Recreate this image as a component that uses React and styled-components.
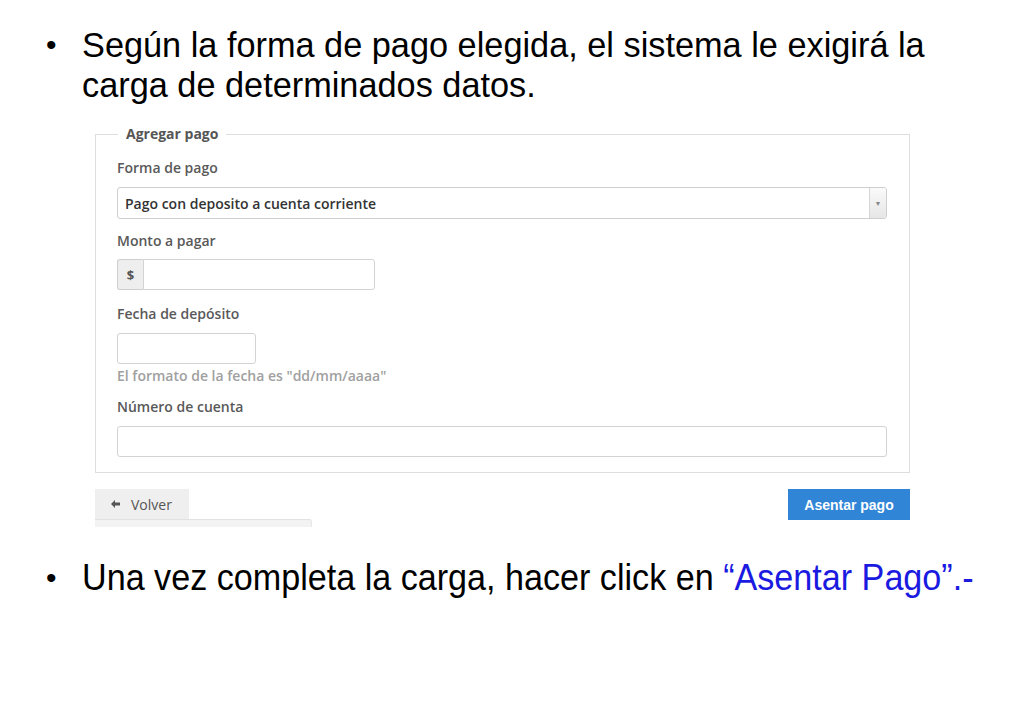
import React from "react";
import styled, { createGlobalStyle } from "styled-components";

const Global = createGlobalStyle`
  html, body { margin: 0; padding: 0; background: #fff; }
  body { width: 1024px; height: 709px; overflow: hidden; }
`;

const Slide = styled.div`
  width: 1024px;
  height: 709px;
  box-sizing: border-box;
  padding-top: 25px;
  display: flex;
  flex-direction: column;
`;

const Bullet = styled.div`
  display: flex;
  align-items: flex-start;
  padding-left: 46px;
  font-family: "Liberation Sans", Arial, sans-serif;
  font-size: ${(p) => p.$fs || 34.3}px;
  line-height: 40px;
  color: #000;
  margin-top: ${(p) => p.$mt || 0}px;
`;

const Dot = styled.span`
  width: 36px;
  flex: none;
  font-size: 30px;
`;

const BulletText = styled.div`
  width: ${(p) => p.$w || 880}px;
  transform-origin: left center;
  white-space: ${(p) => (p.$nowrap ? "nowrap" : "normal")};
  ${(p) => (p.$sx ? `transform: scaleX(${p.$sx});` : "")}
`;

const Blue = styled.span`
  color: #1a1ae0;
`;

const FormArea = styled.div`
  margin-left: 95px;
  width: 815px;
  margin-top: 19px;
  font-family: "Open Sans", sans-serif;
  font-size: 14px;
  color: #555;
`;

const Fieldset = styled.fieldset`
  margin: 0;
  border: 1px solid #dedede;
  padding: 14px 22px 15px 21px;
  min-width: 0;
`;

const Legend = styled.legend`
  padding: 0 8px;
  margin-left: 1px;
  font-weight: 700;
  font-size: 14px;
  line-height: 20px;
  color: #555;
`;

const Group = styled.div`
  margin-top: ${(p) => p.$mt || 0}px;
`;

const Label = styled.label`
  display: block;
  font-weight: 600;
  line-height: 20px;
  margin-bottom: ${(p) => p.$mb || 9}px;
  color: #595959;
`;

const SelectBox = styled.div`
  height: 32px;
  box-sizing: border-box;
  border: 1px solid #cfcfcf;
  border-radius: 3px;
  display: flex;
  align-items: stretch;
  overflow: hidden;
`;

const SelectValue = styled.div`
  flex: 1;
  padding-left: 7px;
  display: flex;
  align-items: center;
  color: #333;
  font-weight: 600;
  font-size: 14px;
`;

const SelectArrow = styled.div`
  width: 16px;
  border-left: 1px solid #d6d6d6;
  background: linear-gradient(#fafafa, #e6e6e6);
  display: flex;
  align-items: center;
  justify-content: center;
  color: #888;
  font-size: 7px;
`;

const InputGroup = styled.div`
  display: flex;
  width: 258px;
  height: 31px;
`;

const Addon = styled.div`
  width: 26px;
  box-sizing: border-box;
  border: 1px solid #cfcfcf;
  border-right: none;
  border-radius: 3px 0 0 3px;
  background: #eeeeee;
  display: flex;
  align-items: center;
  justify-content: center;
  font-weight: 700;
  font-size: 13px;
  color: #555;
`;

const Input = styled.div`
  box-sizing: border-box;
  height: 31px;
  border: 1px solid #d3d3d3;
  border-radius: ${(p) => (p.$grouped ? "0 3px 3px 0" : "3px")};
  width: ${(p) => (p.$w ? `${p.$w}px` : "auto")};
  flex: ${(p) => (p.$grouped ? 1 : "none")};
  background: #fff;
`;

const Help = styled.div`
  margin-top: 3px;
  line-height: 18px;
  color: #a0a0a0;
  font-weight: 600;
  font-size: 14px;
`;

const Actions = styled.div`
  display: flex;
  justify-content: space-between;
  align-items: flex-start;
  margin-top: 16px;
`;

const BackWrap = styled.div`
  display: flex;
  flex-direction: column;
`;

const BackButton = styled.div`
  width: 94px;
  height: 30px;
  background: #efefef;
  display: flex;
  align-items: center;
  gap: 11px;
  padding-left: 16px;
  box-sizing: border-box;
  color: #555;
  font-size: 14px;
`;

const Strip = styled.div`
  width: 216px;
  height: 7px;
  background: #f3f3f3;
  border-top: 1px solid #e2e2e2;
  border-right: 1px solid #e8e8e8;
  border-radius: 0 3px 0 0;
`;

const PrimaryButton = styled.div`
  width: 122px;
  height: 31px;
  background: #3085d6;
  color: #fff;
  font-family: "Liberation Sans", Arial, sans-serif;
  font-weight: 700;
  font-size: 14px;
  display: flex;
  align-items: center;
  justify-content: center;
`;

export default function App() {
  return (
    <>
      <Global />
      <Slide>
        <Bullet>
          <Dot>•</Dot>
          <BulletText $w={860}>
            Según la forma de pago elegida, el sistema le exigirá la carga de determinados datos.
          </BulletText>
        </Bullet>
        <FormArea>
          <Fieldset>
            <Legend>Agregar pago</Legend>
            <Group>
              <Label>Forma de pago</Label>
              <SelectBox>
                <SelectValue>Pago con deposito a cuenta corriente</SelectValue>
                <SelectArrow>▼</SelectArrow>
              </SelectBox>
            </Group>
            <Group $mt={12}>
              <Label $mb={8}>Monto a pagar</Label>
              <InputGroup>
                <Addon>$</Addon>
                <Input $grouped />
              </InputGroup>
            </Group>
            <Group $mt={14}>
              <Label>Fecha de depósito</Label>
              <Input $w={139} />
              <Help>El formato de la fecha es "dd/mm/aaaa"</Help>
            </Group>
            <Group $mt={12}>
              <Label>Número de cuenta</Label>
              <Input />
            </Group>
          </Fieldset>
          <Actions>
            <BackWrap>
              <BackButton>
                <svg width="9" height="8" viewBox="0 0 9 8">
                  <path d="M0 4 L4 0 L4 2.6 L9 2.6 L9 5.4 L4 5.4 L4 8 Z" fill="#555" />
                </svg>
                Volver
              </BackButton>
              <Strip />
            </BackWrap>
            <PrimaryButton>Asentar pago</PrimaryButton>
          </Actions>
        </FormArea>
        <Bullet $mt={31} $fs={36}>
          <Dot>•</Dot>
          <BulletText $nowrap $sx={0.948}>
            Una vez completa la carga, hacer click en <Blue>“Asentar Pago”.-</Blue>
          </BulletText>
        </Bullet>
      </Slide>
    </>
  );
}
